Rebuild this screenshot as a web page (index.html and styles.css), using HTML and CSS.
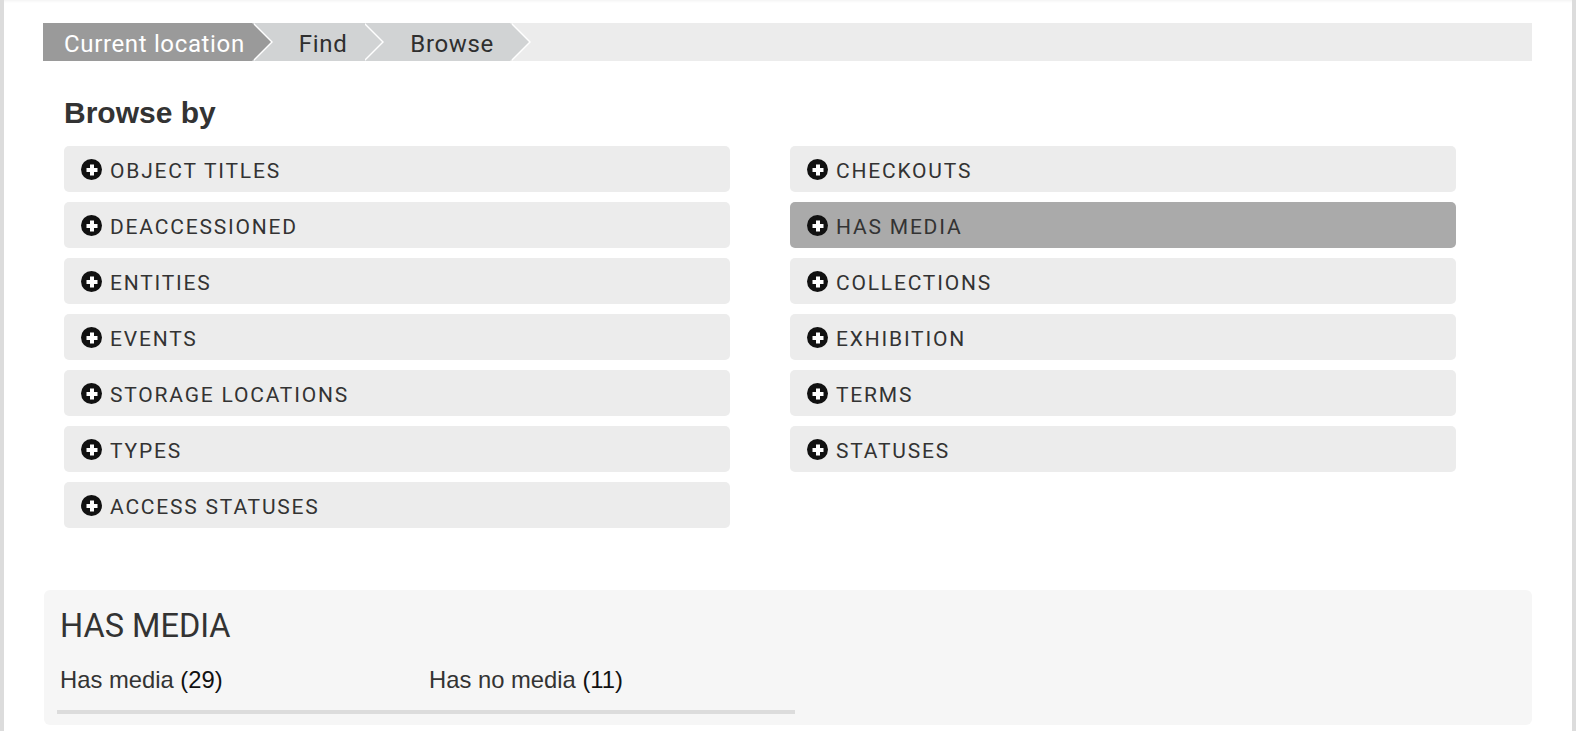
FILE: index.html
```html
<!DOCTYPE html>
<html lang="en">
<head>
<meta charset="utf-8">
<title>Browse</title>
<link rel="stylesheet" href="styles.css">
</head>
<body>
<div class="page">
  <ul class="crumbs">
    <li class="crumb crumb-current">Current location</li>
    <li class="crumb">Find</li>
    <li class="crumb">Browse</li>
  </ul>

  <section class="browse">
    <h2 class="browse-title">Browse by</h2>
    <div class="facets">
      <div class="facet-col">
        <a class="facet"><span class="plus"></span>OBJECT TITLES</a>
        <a class="facet"><span class="plus"></span>DEACCESSIONED</a>
        <a class="facet"><span class="plus"></span>ENTITIES</a>
        <a class="facet"><span class="plus"></span>EVENTS</a>
        <a class="facet"><span class="plus"></span>STORAGE LOCATIONS</a>
        <a class="facet"><span class="plus"></span>TYPES</a>
        <a class="facet"><span class="plus"></span>ACCESS STATUSES</a>
      </div>
      <div class="facet-col">
        <a class="facet"><span class="plus"></span>CHECKOUTS</a>
        <a class="facet facet-active"><span class="plus"></span>HAS MEDIA</a>
        <a class="facet"><span class="plus"></span>COLLECTIONS</a>
        <a class="facet"><span class="plus"></span>EXHIBITION</a>
        <a class="facet"><span class="plus"></span>TERMS</a>
        <a class="facet"><span class="plus"></span>STATUSES</a>
      </div>
    </div>
  </section>

  <section class="results">
    <h3 class="results-title">HAS MEDIA</h3>
    <div class="results-grid">
      <div class="result">Has media <span class="count">(29)</span></div>
      <div class="result">Has no media <span class="count">(11)</span></div>
    </div>
  </section>
</div>
</body>
</html>
```

FILE: styles.css
```css
html, body {
  margin: 0;
  padding: 0;
  background: #ffffff;
}

.page {
  box-sizing: border-box;
  min-height: 100vh;
  border-left: 4px solid #dcdcdc;
  border-right: 4px solid #dcdcdc;
  padding: 23px 40px 0 39px;
  box-shadow: inset 0 3px 3px -2px rgba(0,0,0,0.06);
  font-family: Roboto, "Liberation Sans", sans-serif;
  color: #333333;
}

/* breadcrumb */
.crumbs {
  list-style: none;
  margin: 0;
  padding: 0;
  display: flex;
  height: 38px;
  background: #ececec;
}

.crumb {
  position: relative;
  display: flex;
  align-items: center;
  box-sizing: border-box;
  height: 38px;
  padding: 4px 16px 0 47px;
  background: #d1d3d4;
  color: #2f2f2f;
  font-size: 24px;
  letter-spacing: 0.65px;
}

.crumb::before,
.crumb::after {
  content: "";
  position: absolute;
  top: 0;
  width: 0;
  height: 0;
  border-top: 19px solid transparent;
  border-bottom: 19px solid transparent;
}

.crumb::before {
  left: calc(100% + 2px);
  border-left: 19px solid #ffffff;
  z-index: 1;
}

.crumb::after {
  left: 100%;
  border-left: 19px solid #d1d3d4;
  z-index: 2;
}

.crumb-current {
  background: #9a9a9a;
  color: #ffffff;
  padding-left: 21px;
  padding-right: 7px;
}

.crumb-current::after {
  border-left-color: #9a9a9a;
}

/* browse */
.browse {
  padding: 0 0 0 21px;
}

.browse-title {
  margin: 0;
  padding: 35px 0 0;
  height: 53px;
  box-sizing: border-box;
  font-family: "Liberation Sans", Arial, sans-serif;
  font-weight: bold;
  font-size: 30px;
  line-height: 34px;
  color: #333333;
}

.facets {
  display: flex;
  gap: 60px;
  margin-top: 32px;
}

.facet-col {
  display: flex;
  flex-direction: column;
  gap: 10px;
  width: 666px;
}

.facet {
  display: flex;
  align-items: center;
  box-sizing: border-box;
  height: 46px;
  padding: 3px 0 0 17px;
  border-radius: 5px;
  background: #ececec;
  color: #333333;
  font-size: 21px;
  letter-spacing: 1.8px;
}

.facet-active {
  background: #aaaaaa;
}

.plus {
  position: relative;
  flex: none;
  width: 21px;
  height: 21px;
  margin: -2px 8px 0 0;
  border-radius: 50%;
  background: #111111;
}

.plus::before,
.plus::after {
  content: "";
  position: absolute;
  background: #ffffff;
  left: 50%;
  top: 50%;
  transform: translate(-50%, -50%);
}

.plus::before {
  width: 11px;
  height: 4px;
}

.plus::after {
  width: 4px;
  height: 11px;
}

/* results */
.results {
  margin-top: 62px;
  margin-left: 1px;
  padding: 16px 0 11px 16px;
  background: #f6f6f6;
  border-radius: 6px;
}

.results-title {
  margin: 0;
  font-size: 32.5px;
  font-weight: normal;
  line-height: 40px;
  color: #333333;
}

.results-grid {
  display: grid;
  grid-template-columns: 369px 369px;
  width: 738px;
  margin: 19px 0 0 -3px;
  padding: 0 0 15px 3px;
  border-bottom: 4px solid #dcdcdc;
  box-sizing: border-box;
}

.result {
  font-family: "Liberation Sans", Arial, sans-serif;
  font-size: 23.8px;
  line-height: 30px;
  color: #333333;
}

.count {
  color: #111111;
}
```
